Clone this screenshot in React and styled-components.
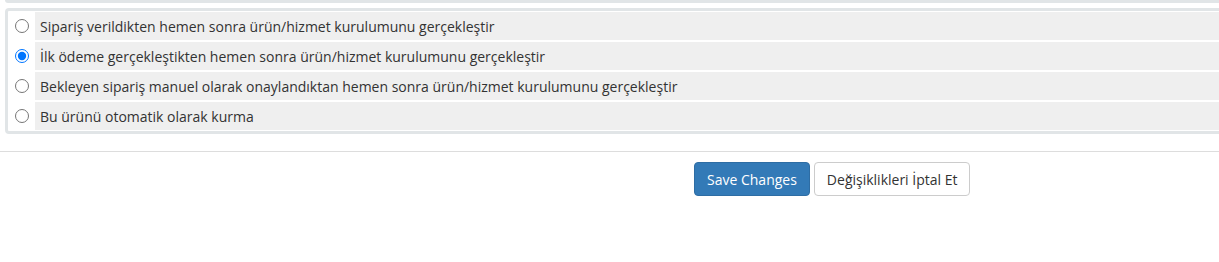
import styled, { createGlobalStyle } from "styled-components";

const GlobalStyle = createGlobalStyle`
  html, body {
    margin: 0;
    padding: 0;
    background: #fff;
    overflow: hidden;
  }
  body {
    font-family: "Open Sans", "Liberation Sans", sans-serif;
    font-size: 14px;
    color: #333;
  }
`;

const Page = styled.div`
  width: 1219px;
`;

const Section = styled.div`
  padding-left: 5px;
`;

const PrevPanelEdge = styled.div`
  width: 1260px;
  height: 3px;
  background: #e1e5e7;
  border-radius: 0 0 0 4px;
`;

const Panel = styled.div`
  margin-top: 5px;
  width: 1260px;
  border: 3px solid #e1e5e7;
  border-radius: 4px;
  padding: 1px 0;
  display: flex;
  flex-direction: column;
  gap: 2px;
`;

const Row = styled.label`
  display: grid;
  grid-template-columns: 27px 1fr;
  height: 28px;
  cursor: pointer;
`;

const RadioCell = styled.div`
  display: flex;
  align-items: center;
  justify-content: center;
  background: #fff;

  input {
    margin: 0 0 0 1px;
    width: 14px;
    height: 14px;
  }
`;

const LabelCell = styled.div`
  background: #efefef;
  display: flex;
  align-items: center;
  padding: 1px 0 0 5px;
  font-size: 14px;
  color: #333;
`;

const Divider = styled.hr`
  margin: 17px 0 0;
  border: 0;
  border-top: 1px solid #ddd;
`;

const Actions = styled.div`
  display: flex;
  gap: 4px;
  padding: 10px 0 0 694px;
`;

const Button = styled.button`
  height: 34px;
  padding: 0 12px;
  border-radius: 4px;
  font-family: "Open Sans", "Liberation Sans", sans-serif;
  font-size: 14px;
  cursor: pointer;
  border: 1px solid ${(p) => (p.$primary ? "#2e6da4" : "#ccc")};
  background: ${(p) => (p.$primary ? "#337ab7" : "#fff")};
  color: ${(p) => (p.$primary ? "#fff" : "#333")};
`;

const options = [
  "Sipariş verildikten hemen sonra ürün/hizmet kurulumunu gerçekleştir",
  "İlk ödeme gerçekleştikten hemen sonra ürün/hizmet kurulumunu gerçekleştir",
  "Bekleyen sipariş manuel olarak onaylandıktan hemen sonra ürün/hizmet kurulumunu gerçekleştir",
  "Bu ürünü otomatik olarak kurma",
];

export default function App() {
  return (
    <Page>
      <GlobalStyle />
      <Section>
        <PrevPanelEdge />
        <Panel>
          {options.map((text, i) => (
            <Row key={i}>
              <RadioCell>
                <input type="radio" name="autosetup" defaultChecked={i === 1} />
              </RadioCell>
              <LabelCell>{text}</LabelCell>
            </Row>
          ))}
        </Panel>
      </Section>
      <Divider />
      <Actions>
        <Button $primary>Save Changes</Button>
        <Button>Değişiklikleri İptal Et</Button>
      </Actions>
    </Page>
  );
}
